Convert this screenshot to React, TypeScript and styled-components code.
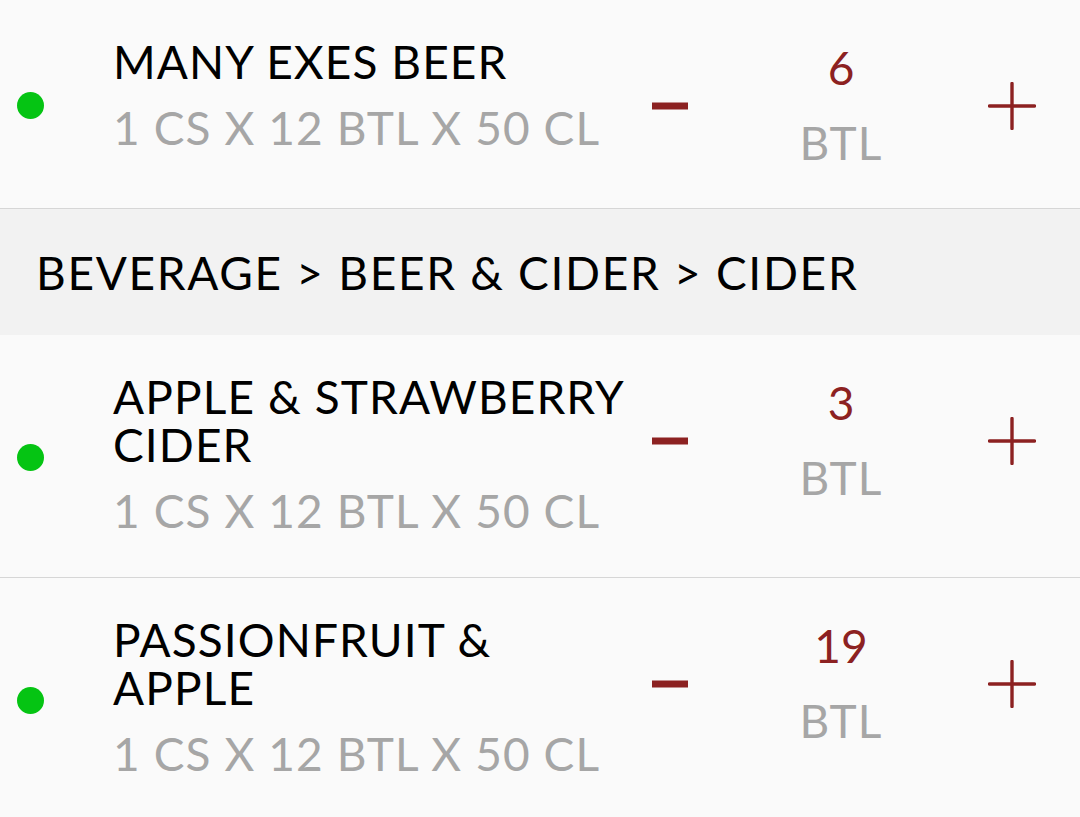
import React from 'react';
import styled, { createGlobalStyle } from 'styled-components';

const GlobalStyle = createGlobalStyle`
  html, body {
    margin: 0;
    padding: 0;
    background: #fafafa;
    overflow: hidden;
  }

  body {
    font-family: 'Lato', 'Noto Sans', sans-serif;
    -webkit-font-smoothing: antialiased;
  }
`;

const ListStyle = styled.div`
  width: 1080px;
  height: 817px;
  overflow: hidden;
  background: #fafafa;
`;

const SectionHeader = styled.div`
  display: flex;
  align-items: center;
  height: 126px;
  padding-left: 36px;
  background: #f2f2f2;
  color: #000;
  font-size: 46px;
  letter-spacing: 1.7px;
`;

const Row = styled.div`
  display: flex;
  align-items: flex-start;
  padding: 38px 0 35px;
  border-bottom: 1px solid #d6d6d6;
  background: #fafafa;
`;

const DotCell = styled.div`
  align-self: center;
  width: 113px;
  flex-shrink: 0;
  display: flex;
  padding-left: 17px;
  box-sizing: border-box;
`;

const Dot = styled.span<{ $color: string }>`
  width: 27px;
  height: 27px;
  border-radius: 50%;
  background: ${(p) => p.$color};
`;

const Info = styled.div`
  flex: 1;
  min-width: 0;
  padding: 0 10px 7px 0;
`;

const Title = styled.div`
  font-size: 46px;
  line-height: 48px;
  color: #000;
  letter-spacing: 1.1px;
`;

const Subtitle = styled.div`
  margin-top: 18px;
  font-size: 46px;
  line-height: 48px;
  color: #a6a6a6;
  letter-spacing: 1.1px;
`;

const Controls = styled.div`
  display: flex;
  align-items: center;
  gap: 41px;
  width: 402px;
  margin-right: 38px;
  flex-shrink: 0;
`;

const StepButton = styled.button`
  display: flex;
  align-items: center;
  justify-content: center;
  width: 60px;
  height: 60px;
  padding: 0;
  border: none;
  background: none;
  cursor: pointer;
`;

const Quantity = styled.div`
  width: 200px;
  display: flex;
  flex-direction: column;
  align-items: center;
`;

const Count = styled.div`
  font-size: 46px;
  line-height: 60px;
  color: #8c2121;
`;

const Unit = styled.div`
  margin-top: 15px;
  font-size: 46px;
  line-height: 60px;
  color: #a6a6a6;
  letter-spacing: 1.1px;
`;

const RED = '#8c2121';

const MinusIcon = () => (
  <svg width="36" height="8" viewBox="0 0 36 8">
    <rect x="0" y="0.5" width="36" height="7" fill={RED} />
  </svg>
);

const PlusIcon = () => (
  <svg width="48" height="48" viewBox="0 0 48 48">
    <path d="M24 1.5V46.5M1.5 24H46.5" stroke={RED} strokeWidth="3.4" strokeLinecap="round" />
  </svg>
);

type Item = {
  name: string;
  pack: string;
  qty: number;
  unit: string;
};

const ProductRow = ({ item }: { item: Item }) => (
  <Row>
    <DotCell>
      <Dot $color="#05c413" />
    </DotCell>
    <Info>
      <Title>{item.name}</Title>
      <Subtitle>{item.pack}</Subtitle>
    </Info>
    <Controls>
      <StepButton aria-label="decrease">
        <MinusIcon />
      </StepButton>
      <Quantity>
        <Count>{item.qty}</Count>
        <Unit>{item.unit}</Unit>
      </Quantity>
      <StepButton aria-label="increase">
        <PlusIcon />
      </StepButton>
    </Controls>
  </Row>
);

const beer: Item[] = [
  { name: 'MANY EXES BEER', pack: '1 CS X 12 BTL X 50 CL', qty: 6, unit: 'BTL' },
];

const cider: Item[] = [
  { name: 'APPLE & STRAWBERRY CIDER', pack: '1 CS X 12 BTL X 50 CL', qty: 3, unit: 'BTL' },
  { name: 'PASSIONFRUIT & APPLE', pack: '1 CS X 12 BTL X 50 CL', qty: 19, unit: 'BTL' },
];

const App = () => {
  return (
    <>
      <GlobalStyle />
      <ListStyle>
        {beer.map((item) => (
          <ProductRow key={item.name} item={item} />
        ))}
        <SectionHeader>BEVERAGE &gt; BEER &amp; CIDER &gt; CIDER</SectionHeader>
        {cider.map((item) => (
          <ProductRow key={item.name} item={item} />
        ))}
      </ListStyle>
    </>
  );
};

export default App;
